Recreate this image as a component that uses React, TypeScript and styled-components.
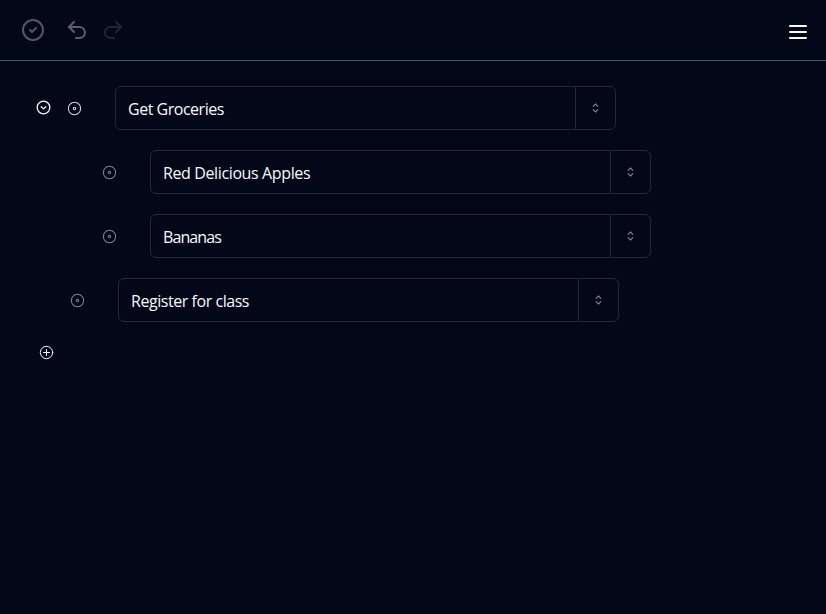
import React from "react";
import styled, { createGlobalStyle } from "styled-components";

const GlobalStyle = createGlobalStyle`
  * { box-sizing: border-box; }
  body {
    margin: 0;
    background: #020817;
    color: #f8fafc;
    font-family: "Open Sans", "Noto Sans", sans-serif;
  }
`;

const Page = styled.div`
  min-height: 100vh;
  background: #020817;
`;

const Header = styled.header`
  display: flex;
  justify-content: space-between;
  height: 61px;
  padding: 18px 16px 0 21px;
  border-bottom: 1px solid #435260;
`;

const Actions = styled.div`
  display: flex;
  gap: 20px;
`;

const IconButton = styled.button<{ $opacity?: number; $gap?: number; $top?: number; $color?: string }>`
  display: block;
  width: 24px;
  height: 24px;
  padding: 0;
  border: 0;
  background: none;
  color: ${(p) => p.$color ?? "inherit"};
  margin-top: ${(p) => p.$top ?? 0}px;
  margin-right: ${(p) => p.$gap ?? 0}px;
  opacity: ${(p) => p.$opacity ?? 1};
`;

const StrokeIcon = styled.svg`
  display: block;
  fill: none;
  stroke: currentColor;
  stroke-linecap: round;
  stroke-linejoin: round;
`;

const List = styled.main`
  display: flex;
  flex-direction: column;
  gap: 20px;
  padding-top: 25px;
`;

const Row = styled.div<{ $indent: number }>`
  display: flex;
  align-items: center;
  height: 44px;
  padding-left: ${(p) => p.$indent}px;
`;

const SmallButton = styled.button<{ $opacity?: number; $right?: number; $lift?: number }>`
  width: 15px;
  height: 15px;
  padding: 0;
  border: 0;
  background: none;
  color: #f8fafc;
  opacity: ${(p) => p.$opacity ?? 1};
  margin-right: ${(p) => p.$right ?? 0}px;
  margin-bottom: ${(p) => p.$lift ?? 0}px;
`;

const Field = styled.div`
  display: flex;
  width: 501px;
  height: 44px;
  border: 1px solid #1e293b;
  border-radius: 6px;
`;

const Title = styled.div<{ $spacing: number }>`
  flex: 1;
  padding-left: 12px;
  font-size: 16px;
  line-height: 44px;
  letter-spacing: ${(p) => p.$spacing}px;
  white-space: nowrap;
`;

const Handle = styled.button`
  display: flex;
  align-items: center;
  justify-content: center;
  width: 40px;
  padding: 0;
  border: 0;
  border-left: 1px solid #1e293b;
  background: none;
  color: rgba(248, 250, 252, 0.5);
`;

const AddRow = styled.div`
  display: flex;
  padding-left: 39px;
  margin-top: 3px;
`;

const Target = () => (
  <StrokeIcon width="15" height="15" viewBox="0 0 15 15" strokeWidth="1.05">
    <circle cx="7.5" cy="7.5" r="6.15" />
    <circle cx="7.5" cy="7.5" r="1.25" />
  </StrokeIcon>
);

const Sorter = () => (
  <StrokeIcon width="15" height="16" viewBox="0 -0.5 15 16" strokeWidth="1.15">
    <path d="M5.2 5.8 7.5 3.5l2.3 2.3M5.2 9.2 7.5 11.5l2.3-2.3" />
  </StrokeIcon>
);

type Task = { title: string; indent: number; spacing: number; open?: boolean };

const tasks: Task[] = [
  { title: "Get Groceries", indent: 36, spacing: -0.48, open: true },
  { title: "Red Delicious Apples", indent: 102, spacing: -0.38 },
  { title: "Bananas", indent: 102, spacing: -0.9 },
  { title: "Register for class", indent: 70, spacing: -0.45 },
];

export default function App() {
  return (
    <Page>
      <GlobalStyle />
      <Header>
        <Actions>
          <IconButton $opacity={0.32} aria-label="Completed">
            <StrokeIcon width="24" height="24" viewBox="0 0 24 24" strokeWidth="2">
              <circle cx="12" cy="12" r="10" />
              <path d="m9 12 2 2 4-4" />
            </StrokeIcon>
          </IconButton>
          <IconButton $opacity={0.4} $gap={-8} $color="#d3e6ea" aria-label="Undo">
            <StrokeIcon width="24" height="24" viewBox="0 0 24 24" strokeWidth="2">
              <path d="M9 14 4 9l5-5" />
              <path d="M4 9h10.5a5.5 5.5 0 0 1 0 11H11" />
            </StrokeIcon>
          </IconButton>
          <IconButton $opacity={0.12} aria-label="Redo">
            <StrokeIcon width="24" height="24" viewBox="0 0 24 24" strokeWidth="2">
              <path d="m15 14 5-5-5-5" />
              <path d="M20 9H9.5a5.5 5.5 0 0 0 0 11H13" />
            </StrokeIcon>
          </IconButton>
        </Actions>
        <IconButton $top={2} aria-label="Menu">
          <StrokeIcon width="24" height="24" viewBox="0 0 24 24" strokeWidth="2">
            <path d="M4 6h16M4 12h16M4 18h16" />
          </StrokeIcon>
        </IconButton>
      </Header>
      <List>
        {tasks.map((task) => (
          <Row key={task.title} $indent={task.indent}>
            {task.open && (
              <SmallButton $right={16} $lift={1} aria-label="Collapse">
                <StrokeIcon width="15" height="15" viewBox="0 0 15 15" strokeWidth="1.3">
                  <circle cx="7.5" cy="7.5" r="6.3" />
                  <path d="m5.2 6.7 2.3 2.2 2.3-2.2" />
                </StrokeIcon>
              </SmallButton>
            )}
            <SmallButton $opacity={task.open ? 0.85 : 0.5} $right={33} aria-label="Focus">
              <Target />
            </SmallButton>
            <Field>
              <Title $spacing={task.spacing}>{task.title}</Title>
              <Handle aria-label="Reorder">
                <Sorter />
              </Handle>
            </Field>
          </Row>
        ))}
        <AddRow>
          <SmallButton aria-label="Add task">
            <StrokeIcon width="15" height="15" viewBox="0 0 15 15" strokeWidth="1">
              <circle cx="7.5" cy="7.5" r="6.2" />
              <path d="M7.5 4.5v6M4.5 7.5h6" />
            </StrokeIcon>
          </SmallButton>
        </AddRow>
      </List>
    </Page>
  );
}
